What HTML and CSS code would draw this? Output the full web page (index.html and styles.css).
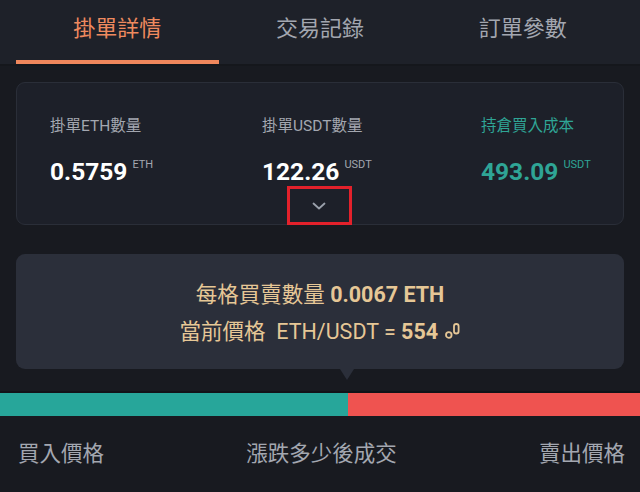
FILE: index.html
```html
<!DOCTYPE html>
<html lang="zh-Hant">
<head>
  <meta charset="UTF-8">
  <meta name="viewport" content="width=device-width, initial-scale=1.0">
  <title>掛單詳情</title>
  <link rel="stylesheet" href="styles.css">
</head>
<body>
  <nav class="tabs">
    <div class="tab active">掛單詳情</div>
    <div class="tab">交易記錄</div>
    <div class="tab">訂單參數</div>
  </nav>

  <div class="page">
    <!-- Order summary -->
    <section class="summary">
      <div class="stats">
        <div class="stat">
          <div class="stat-label">掛單ETH數量</div>
          <div class="stat-value">0.5759<sup>ETH</sup></div>
        </div>
        <div class="stat">
          <div class="stat-label">掛單USDT數量</div>
          <div class="stat-value">122.26<sup>USDT</sup></div>
        </div>
        <div class="stat stat-green">
          <div class="stat-label">持倉買入成本</div>
          <div class="stat-value">493.09<sup>USDT</sup></div>
        </div>
      </div>
      <div class="expand">
        <span class="expand-box">
          <svg width="14" height="8" viewBox="0 0 14 8"><path d="M1.5 1.5 L7 6.5 L12.5 1.5" fill="none" stroke="#9aa0ab" stroke-width="1.8" stroke-linecap="round" stroke-linejoin="round"/></svg>
        </span>
      </div>
    </section>

    <!-- Price tip -->
    <section class="tip">
      <p>每格買賣數量 <b>0.0067 ETH</b></p>
      <p>當前價格&nbsp; ETH/USDT = <b>554</b>
        <svg class="tip-icon" width="15" height="18" viewBox="0 0 15 18"><circle cx="3.8" cy="13" r="2.8" fill="none" stroke="#e6c796" stroke-width="1.8"/><rect x="9" y="2" width="4.6" height="9.5" rx="2.3" fill="none" stroke="#e6c796" stroke-width="1.8"/></svg>
      </p>
    </section>
  </div>

  <div class="ratio">
    <div class="ratio-buy"></div>
    <div class="ratio-sell"></div>
  </div>

  <div class="columns">
    <span>買入價格</span>
    <span>漲跌多少後成交</span>
    <span>賣出價格</span>
  </div>
</body>
</html>
```

FILE: styles.css
```css
/* Reset */
* {
  margin: 0;
  padding: 0;
  box-sizing: border-box;
}
body {
  font-family: Roboto, "Noto Sans CJK TC", sans-serif;
  background-color: #181a20;
  color: #a3a7b0;
  width: 640px;
  height: 492px;
  overflow: hidden;
}

/* Tabs */
.tabs {
  display: flex;
  padding: 0 16px;
  height: 66px;
  background: #1e2129;
  border-bottom: 2px solid #15171c;
}
.tab {
  width: 203px;
  text-align: center;
  font-size: 22px;
  line-height: 58px;
  color: #a3a7b0;
  border-bottom: 4px solid transparent;
}
.tab.active {
  color: #ef8a5f;
  border-bottom-color: #f0875c;
}

.page {
  padding: 16px 16px 0;
}

/* Summary card */
.summary {
  background: #1d2029;
  border: 1px solid #2a2e38;
  border-radius: 9px;
  height: 143px;
  padding: 33px 0 0 33px;
}
.stats {
  display: flex;
}
.stat {
  flex: 0 0 212px;
}
.stat:nth-child(2) {
  flex-basis: 219px;
}
.stat:last-child {
  flex: 1;
}
.stat-label {
  font-size: 15.5px;
  line-height: 20px;
  color: #a3a7b0;
}
.stat-value {
  margin-top: 16px;
  font-size: 24.5px;
  font-weight: bold;
  line-height: 26px;
  color: #fff;
}
.stat-value sup {
  font-size: 11px;
  font-weight: normal;
  color: #a3a7b0;
  margin-left: 5px;
  vertical-align: 12px;
}
.stat-green .stat-label,
.stat-green .stat-value,
.stat-green .stat-value sup {
  color: #2fa596;
}

.expand {
  display: flex;
  justify-content: center;
  margin: 1px 0 0 -35px;
}
.expand-box {
  display: flex;
  align-items: center;
  justify-content: center;
  width: 65px;
  height: 39px;
  border: 3px solid #e3212b;
}

/* Tip card */
.tip {
  position: relative;
  margin-top: 29px;
  height: 115px;
  background: #2b2f3a;
  border-radius: 9px;
  padding-top: 22px;
  text-align: center;
  color: #e6c796;
  font-size: 21.5px;
  line-height: 37px;
}
.tip b {
  font-weight: bold;
}
.tip-icon {
  vertical-align: -1px;
  margin-left: 2px;
}
.tip::after {
  content: "";
  position: absolute;
  left: 324px;
  bottom: -11px;
  border-left: 7px solid transparent;
  border-right: 7px solid transparent;
  border-top: 11px solid #2b2f3a;
}

/* Buy / sell ratio */
.ratio {
  display: flex;
  margin-top: 22px;
  height: 25px;
  border-top: 2px solid #121318;
}
.ratio-buy {
  width: 348px;
  background: #27a69a;
}
.ratio-sell {
  flex: 1;
  background: #ef5350;
}

.columns {
  display: flex;
  justify-content: space-between;
  padding: 0 15px 0 18px;
  margin-top: 22px;
  font-size: 21.5px;
  line-height: 32px;
  color: #a3a7b0;
}
```
